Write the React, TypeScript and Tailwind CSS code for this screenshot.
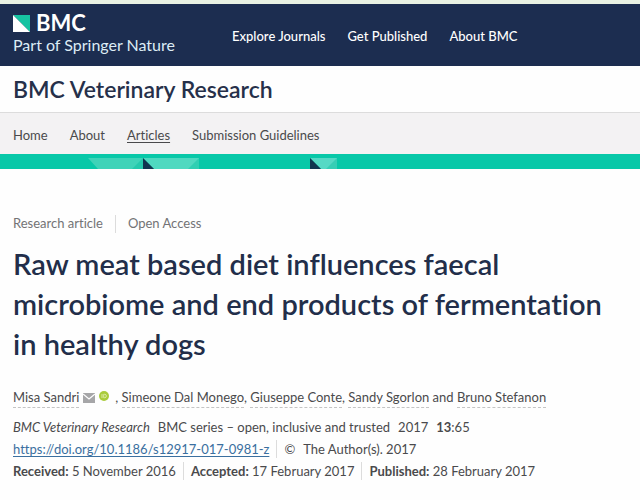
import React from 'react';

const siteLinks = ['Explore Journals', 'Get Published', 'About BMC'];

const journalLinks = [
  { label: 'Home', active: false },
  { label: 'About', active: false },
  { label: 'Articles', active: true },
  { label: 'Submission Guidelines', active: false },
];

const dates = [
  { label: 'Received:', value: '5 November 2016' },
  { label: 'Accepted:', value: '17 February 2017' },
  { label: 'Published:', value: '28 February 2017' },
];

function Divider() {
  return <span className="mx-[7px] h-[18px] w-px shrink-0 bg-[#dcdcdc]" />;
}

function Author({ name }: { name: string }) {
  return (
    <a href="#" className="border-b border-dashed border-[#c4c4c4]">
      {name}
    </a>
  );
}

function SiteHeader() {
  return (
    <header className="flex h-[66px] items-center border-t-4 border-[#e9f1e3] bg-[#1c2d50] px-[13px] text-white">
      <a href="#" className="w-[219px] shrink-0 pb-0.5">
        <span className="flex items-center gap-1.5">
          <svg width="17" height="17" viewBox="0 0 17 17" aria-hidden="true">
            <path d="M0 0h17v17z" fill="#17c3a2" />
            <path d="M0 0l17 17H0z" fill="#fff" />
          </svg>
          <span className="text-[22px] leading-[22px] font-bold">BMC</span>
        </span>
        <span className="block text-base leading-[22px] text-[#dcecf5]">Part of Springer Nature</span>
      </a>
      <nav className="flex gap-[22px] pt-1 text-[13px] font-medium">
        {siteLinks.map((label) => (
          <a key={label} href="#">
            {label}
          </a>
        ))}
      </nav>
    </header>
  );
}

function Banner() {
  return (
    <div className="h-[15px] overflow-hidden bg-[#08c8a8]">
      <svg width="640" height="15" viewBox="0 0 640 15" aria-hidden="true">
        <path d="M88 4h55v11H98z" fill="#3fd3b8" />
        <path d="M143 4v11h-11z" fill="#25c9ac" />
        <path d="M143 4h56v11h-45z" fill="#4fd9c0" />
        <path d="M199 4v11h-11z" fill="#2fcfb2" />
        <path d="M143 4l11 11h-11z" fill="#10354f" />
        <path d="M310 4h27v11h-16z" fill="#55d9c5" />
        <path d="M337 4v11h-11z" fill="#36ceb5" />
        <path d="M310 4l11 11h-11z" fill="#10354f" />
      </svg>
    </div>
  );
}

export default function App() {
  return (
    <div className="min-h-screen bg-[#fefefe] font-['Lato','Liberation_Sans',sans-serif] text-[13px] text-[#4a4a4c] [font-variant-ligatures:none]">
      <SiteHeader />
      <div className="flex h-[46px] items-center px-[13px] text-[23px] font-semibold text-[#26304a]">
        BMC Veterinary Research
      </div>
      <nav className="flex h-[42px] items-center gap-[22px] border-t border-[#dcdcdc] bg-[#f3f2f3] px-[13px] pt-1">
        {journalLinks.map(({ label, active }) => (
          <a key={label} href="#" className={active ? 'underline underline-offset-2' : ''}>
            {label}
          </a>
        ))}
      </nav>
      <Banner />

      <main className="px-[13px] pt-[45px]">
        <div className="flex h-5 items-center text-[#737375]">
          <span>Research article</span>
          <span className="mx-3 h-[18px] w-px bg-[#dcdcdc]" />
          <span>Open Access</span>
        </div>
        <h1 className="mt-2.5 text-[29px] leading-10 font-semibold text-[#222e4a]">
          Raw meat based diet influences faecal microbiome and end products of fermentation in healthy dogs
        </h1>

        <div className="mt-6 flex h-5 items-center whitespace-pre">
          <Author name="Misa Sandri" />
          <svg className="ml-1" width="12" height="10" viewBox="0 0 12 10" aria-label="Email author">
            <path d="M0 0h12v10H0z" fill="#a6a6a8" />
            <path d="M0 1l6 5 6-5" fill="none" stroke="#fff" strokeWidth="1.2" />
          </svg>
          <svg className="mr-1.5 mb-1 ml-1" width="10" height="10" viewBox="0 0 10 10" aria-label="ORCID profile">
            <circle cx="5" cy="5" r="5" fill="#a9cb3c" />
            <path d="M3 3v4M4.7 3.3h1a1.7 1.7 0 0 1 0 3.4h-1z" fill="none" stroke="#e6f0bd" strokeWidth="0.8" />
          </svg>
          <span>, </span>
          <Author name="Simeone Dal Monego" />
          <span>, </span>
          <Author name="Giuseppe Conte" />
          <span>, </span>
          <Author name="Sandy Sgorlon" />
          <span className="border-b border-transparent"> and </span>
          <Author name="Bruno Stefanon" />
        </div>

        <div className="mt-2 leading-[22px]">
          <p className="flex gap-2">
            <em>BMC Veterinary Research</em>
            <span>BMC series – open, inclusive and trusted</span>
            <span>2017</span>
            <span>
              <b>13</b>:65
            </span>
          </p>
          <p className="flex items-center">
            <a href="https://doi.org/10.1186/s12917-017-0981-z" className="text-[#3a6f9f] underline underline-offset-2">
              https://doi.org/10.1186/s12917-017-0981-z
            </a>
            <Divider />
            <span className="mr-2">©</span>
            <span>The Author(s). 2017</span>
          </p>
          <p className="flex items-center">
            {dates.map(({ label, value }, i) => (
              <React.Fragment key={label}>
                {i > 0 && <Divider />}
                <span>
                  <b>{label}</b> {value}
                </span>
              </React.Fragment>
            ))}
          </p>
        </div>
      </main>
    </div>
  );
}
